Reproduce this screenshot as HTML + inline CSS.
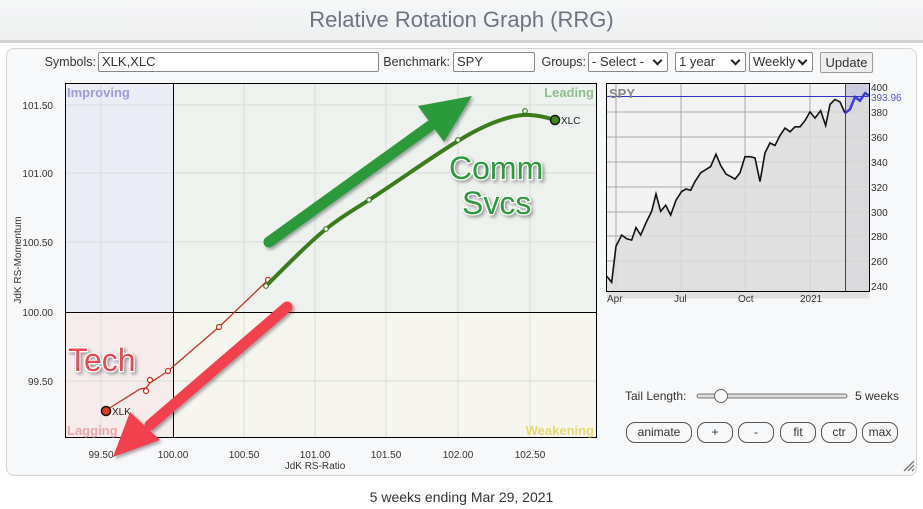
<!DOCTYPE html>
<html><head><meta charset="utf-8"><style>
*{margin:0;padding:0;box-sizing:border-box}
body{width:923px;height:509px;background:#fff;font-family:"Liberation Sans",Arial,sans-serif;position:relative;overflow:hidden;color:#333}
.hdr{position:absolute;left:0;top:0;width:923px;height:43px;background:linear-gradient(#f6f7f8,#eeeff0);border-bottom:3px solid #cfd2d4;text-align:center;font-size:22px;color:#6b7482;line-height:40px}
.panel{position:absolute;left:6px;top:48px;width:911px;height:428px;background:#f7f8fa;border:1px solid #d4d4d4;border-radius:8px}
.a{position:absolute;font-size:12.5px;color:#333;white-space:nowrap;text-align:right}
.in{position:absolute;height:20px;border:1px solid #888;background:#fff;font-size:13px;padding:1px 3px;line-height:16px;border-radius:2px}
.sel{position:absolute;height:20px;border:1px solid #888;background:#fff;font-size:13px;padding:1px 3px;line-height:16px;border-radius:2px}
.sel:after{content:"";position:absolute;right:6px;top:4px;width:5px;height:5px;border-right:2px solid #222;border-bottom:2px solid #222;transform:rotate(45deg)}
.btn{position:absolute;height:21px;border:1px solid #555;border-radius:9px;background:#f7f8fa;font-size:12px;text-align:center;line-height:19px;color:#333}
.ft{position:absolute;left:0;width:923px;top:489px;text-align:center;font-size:14px;color:#333}
</style></head><body>
<div class="hdr">Relative Rotation Graph (RRG)</div>
<div class="panel"></div>
<div class="a" style="left:20px;width:76px;top:55px">Symbols:</div>
<div class="in" style="left:98px;top:52px;width:281px">XLK,XLC</div>
<div class="a" style="left:370px;width:80px;top:55px">Benchmark:</div>
<div class="in" style="left:453px;top:52px;width:82px">SPY</div>
<div class="a" style="left:530px;width:56px;top:55px">Groups:</div>
<div class="sel" style="left:588px;top:52px;width:80px">- Select -</div>
<div class="sel" style="left:675px;top:52px;width:71px">1 year</div>
<div class="sel" style="left:749px;top:52px;width:64px">Weekly</div>
<div class="btn" style="left:820px;top:52px;width:53px;border-radius:2px;border-color:#999;background:#eee;font-size:13px">Update</div>

<svg style="position:absolute;left:0;top:0" width="923" height="509">
<defs>
<filter id="sh" x="-20%" y="-20%" width="140%" height="140%"><feDropShadow dx="2" dy="2" stdDeviation="1.5" flood-color="#000" flood-opacity="0.35"/></filter>
</defs>
<rect x="65" y="83" width="108" height="229" fill="#ececf6"/>
<rect x="173" y="83" width="424" height="229" fill="#eef2ee"/>
<rect x="65" y="312" width="108" height="126" fill="#f6ecec"/>
<rect x="173" y="312" width="424" height="126" fill="#f6f5ee"/>
<g stroke="#d9dbd9" stroke-width="1">
<line x1="101" y1="83" x2="101" y2="438"/><line x1="244" y1="83" x2="244" y2="438"/><line x1="315" y1="83" x2="315" y2="438"/><line x1="386" y1="83" x2="386" y2="438"/><line x1="458" y1="83" x2="458" y2="438"/><line x1="530" y1="83" x2="530" y2="438"/>
<line x1="65" y1="105" x2="597" y2="105"/><line x1="65" y1="173" x2="597" y2="173"/><line x1="65" y1="242" x2="597" y2="242"/><line x1="65" y1="381" x2="597" y2="381"/>
</g>
<line x1="173.5" y1="83" x2="173.5" y2="438" stroke="#000"/>
<line x1="65" y1="312.5" x2="597" y2="312.5" stroke="#000"/>
<rect x="65.5" y="83.5" width="531" height="354" fill="none" stroke="#000"/>
<g font-size="13" font-weight="bold">
<text x="67" y="97" fill="#9a9ade">Improving</text>
<text x="594" y="97" fill="#8fbf8f" text-anchor="end">Leading</text>
<text x="67" y="435" fill="#eaa6a6">Lagging</text>
<text x="594" y="435" fill="#e6d874" text-anchor="end">Weakening</text>
</g>
<g font-size="10" fill="#333" text-anchor="end">
<text x="53" y="109">101.50</text><text x="53" y="177">101.00</text><text x="53" y="246">100.50</text><text x="53" y="316">100.00</text><text x="53" y="385">99.50</text>
</g>
<g font-size="10" fill="#333" text-anchor="middle">
<text x="101" y="458">99.50</text><text x="173" y="458">100.00</text><text x="244" y="458">100.50</text><text x="315" y="458">101.00</text><text x="386" y="458">101.50</text><text x="458" y="458">102.00</text><text x="530" y="458">102.50</text>
<text x="315" y="469">JdK RS-Ratio</text>
</g>
<text transform="translate(21,260) rotate(-90)" font-size="10" fill="#333" text-anchor="middle">JdK RS-Momentum</text>

<polyline points="108,409 140,389 146,388 150,383 168,371 219,327 268,280" fill="none" stroke="#c83020" stroke-width="1.3"/>
<g fill="#fff" stroke="#c83020" stroke-width="1.2">
<circle cx="146" cy="391" r="2.5"/><circle cx="150" cy="380" r="2.5"/><circle cx="168" cy="371" r="2.5"/><circle cx="219" cy="327" r="2.5"/><circle cx="268" cy="280" r="2.5"/>
</g>
<circle cx="106" cy="411" r="4.5" fill="#e03a20" stroke="#111" stroke-width="1.5"/>
<text x="112" y="415" font-size="10" fill="#222">XLK</text>
<path d="M266,286 C290,262 310,242 326,229 C345,214 360,206 369,200 C400,180 430,158 458,141 C490,121 515,114 530,115 C545,116 550,119 555,120" fill="none" stroke="#3a7e1a" stroke-width="4"/>
<g fill="#fff" stroke="#3a7e1a" stroke-width="1.2">
<circle cx="266" cy="286" r="2.3"/><circle cx="326" cy="229" r="2.3"/><circle cx="369" cy="200" r="2.3"/><circle cx="458" cy="140" r="2.3"/><circle cx="525" cy="111" r="2.3"/>
</g>
<circle cx="555" cy="120" r="4.5" fill="#3a8a1a" stroke="#111" stroke-width="1.5"/>
<text x="561" y="124" font-size="10" fill="#222">XLC</text>

<g filter="url(#sh)">
<line x1="269" y1="242" x2="430" y2="126" stroke="#2a9a3a" stroke-width="11" stroke-linecap="round"/>
<polygon points="472,96 418,106 444,142" fill="#2a9a3a"/>
<line x1="287" y1="307" x2="150" y2="425" stroke="#f2404e" stroke-width="11" stroke-linecap="round"/>
<polygon points="113,457 130,412 160,440" fill="#f2404e"/>
</g>
<g font-size="32" filter="url(#sh)" stroke="#fff" stroke-width="2.5" paint-order="stroke">
<text x="449" y="179" fill="#2e9a3c">Comm</text>
<text x="462" y="214" fill="#2e9a3c">Svcs</text>
<text x="68" y="371" fill="#e84a55">Tech</text>
</g>

<rect x="606" y="83" width="264" height="209" fill="#f3f3f3"/>
<rect x="845" y="83" width="25" height="209" fill="#ccccdd"/>
<g stroke="#aaa" stroke-width="1">
<line x1="616" y1="83" x2="616" y2="292"/><line x1="681" y1="83" x2="681" y2="292"/><line x1="745" y1="83" x2="745" y2="292"/><line x1="810" y1="83" x2="810" y2="292"/>
<line x1="606" y1="112" x2="870" y2="112"/><line x1="606" y1="137" x2="870" y2="137"/><line x1="606" y1="162" x2="870" y2="162"/><line x1="606" y1="187" x2="870" y2="187"/><line x1="606" y1="212" x2="870" y2="212"/><line x1="606" y1="236" x2="870" y2="236"/><line x1="606" y1="261" x2="870" y2="261"/>
</g>
<g transform="matrix(0.33333 0 0 -1.244 600 584.6)">
<polygon fill="#dcdcdc" fill-opacity="0.85" points="20,230 20,248 35,243 48,272 65,281 80,278 95,277 108,287 122,281 140,292 155,300 168,314 182,300 197,305 212,297 228,309 245,316 258,318 272,317 285,324 302,331 320,334 332,336 348,346 362,337 378,330 392,328 405,326 420,331 435,344 450,344 465,343 480,324 495,347 510,355 525,353 540,361 555,367 570,364 585,368 600,368 615,373 630,380 645,375 662,381 677,369 690,386 705,390 720,388 735,379 750,382 765,392 780,389 795,395 808,393 808,230"/>
<polyline fill="none" stroke="#111" stroke-width="1.6" vector-effect="non-scaling-stroke" points="20,248 35,243 48,272 65,281 80,278 95,277 108,287 122,281 140,292 155,300 168,314 182,300 197,305 212,297 228,309 245,316 258,318 272,317 285,324 302,331 320,334 332,336 348,346 362,337 378,330 392,328 405,326 420,331 435,344 450,344 465,343 480,324 495,347 510,355 525,353 540,361 555,367 570,364 585,368 600,368 615,373 630,380 645,375 662,381 677,369 690,386 705,390 720,388 735,379"/>
<polyline fill="none" stroke="#3a3ae0" stroke-width="2.5" vector-effect="non-scaling-stroke" points="735,379 750,382 765,392 780,389 795,395 808,393"/>
</g>
<line x1="845.5" y1="83" x2="845.5" y2="292" stroke="#3333cc"/>
<line x1="606" y1="96.5" x2="870" y2="96.5" stroke="#3333cc"/>
<rect x="606.5" y="83.5" width="263" height="208" fill="none" stroke="#000"/>
<text x="609" y="98" font-size="13" font-weight="bold" fill="#888">SPY</text>
<g font-size="10" fill="#333">
<text x="871" y="91">400</text><text x="871" y="116">380</text><text x="871" y="141">360</text><text x="871" y="166">340</text><text x="871" y="191">320</text><text x="871" y="216">300</text><text x="871" y="240">280</text><text x="871" y="265">260</text><text x="871" y="290">240</text>
<text x="871" y="101" fill="#5555cc">393.96</text>
<text x="607" y="302">Apr</text><text x="674" y="302">Jul</text><text x="738" y="302">Oct</text><text x="800" y="302">2021</text>
</g>
<text x="625" y="400" font-size="12" fill="#333">Tail Length:</text>
<rect x="697" y="394" width="150" height="4" rx="2" fill="#ddd" stroke="#777"/>
<circle cx="721" cy="396" r="6.5" fill="#f5f5f5" stroke="#666"/>
<text x="855" y="400" font-size="12" fill="#333">5 weeks</text>
<g stroke="#777" stroke-width="1.3"><line x1="904" y1="471" x2="914" y2="461"/><line x1="908" y1="471" x2="914" y2="465"/><line x1="912" y1="471" x2="914" y2="469"/></g>
</svg>
<div class="btn" style="left:626px;top:422px;width:66px">animate</div>
<div class="btn" style="left:697px;top:422px;width:36px">+</div>
<div class="btn" style="left:738px;top:422px;width:36px">-</div>
<div class="btn" style="left:780px;top:422px;width:36px">fit</div>
<div class="btn" style="left:821px;top:422px;width:36px">ctr</div>
<div class="btn" style="left:862px;top:422px;width:36px">max</div>
<div class="ft">5 weeks ending Mar 29, 2021</div>
</body></html>
